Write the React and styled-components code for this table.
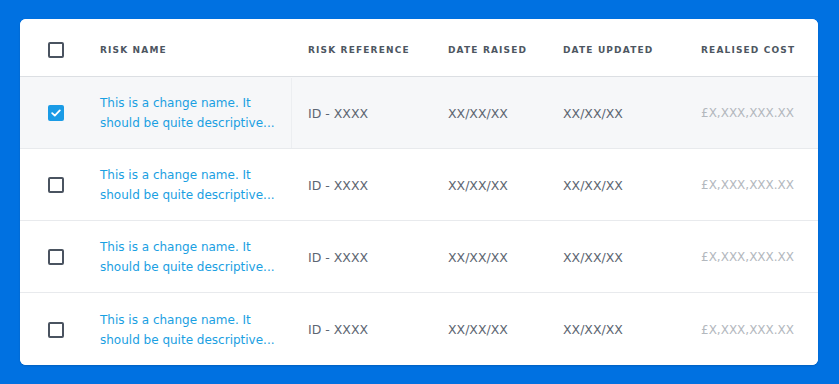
import React, { useState } from 'react'
import styled, { createGlobalStyle } from 'styled-components'

const Global = createGlobalStyle`
  html, body {
    margin: 0;
    padding: 0;
    background: #0071e1;
  }
  body {
    font-family: "DejaVu Sans", Verdana, sans-serif;
  }
`

const Page = styled.div`
  padding: 19px 21px 19px 20px;
`

const Card = styled.div`
  background: #fff;
  border-radius: 6px;
  overflow: hidden;
  box-shadow: 0 1px 2px rgba(0, 0, 0, 0.15);
`

const Row = styled.div`
  display: grid;
  grid-template-columns: 80px 192px 156px 115px 138px 1fr;
  align-items: stretch;
  box-sizing: border-box;
  height: ${p => (p.head ? '58px' : '72px')};
  padding-top: ${p => (p.head ? '4px' : '1px')};
  background: ${p => (p.selected ? '#f6f7f9' : '#fff')};
  border-bottom: 1px solid ${p => (p.head ? '#dcdfe3' : '#e8eaed')};
  &:last-child {
    border-bottom: none;
  }
`

const Cell = styled.div`
  display: flex;
  align-items: center;
  padding-left: ${p => p.pl || 0}px;
  border-right: ${p => (p.divider ? '1px solid #eceef1' : 'none')};
  font-size: 12.5px;
  color: #5d6672;
  white-space: nowrap;
`

const CheckCell = styled(Cell)`
  padding-left: 28px;
`

const HeadLabel = styled.span`
  font-size: 9px;
  font-weight: bold;
  letter-spacing: 1.15px;
  color: #4d5661;
  text-transform: uppercase;
`

const Name = styled.span`
  color: #1aa0e2;
  font-size: 12px;
  line-height: 20px;
  white-space: normal;
  width: 186px;
`

const Cost = styled.span`
  color: #b3b8be;
  font-size: 12px;
`

const Box = styled.div`
  width: 16px;
  height: 16px;
  box-sizing: border-box;
  border-radius: 2px;
  border: ${p => (p.checked ? 'none' : '2px solid #4a5360')};
  background: ${p => (p.checked ? '#1a9be6' : '#fff')};
  display: flex;
  align-items: center;
  justify-content: center;
  cursor: pointer;
`

function Checkbox({ checked, onClick }) {
  return (
    <Box checked={checked} onClick={onClick}>
      {checked && (
        <svg width="10" height="8" viewBox="0 0 10 8">
          <path d="M1.2 4.2 L3.8 6.6 L8.8 1.4" fill="none" stroke="#fff" strokeWidth="1.8" strokeLinecap="round" strokeLinejoin="round" />
        </svg>
      )}
    </Box>
  )
}

const rows = [1, 2, 3, 4]

export default function App() {
  const [sel, setSel] = useState({ 1: true })

  return (
    <Page>
      <Global />
      <Card>
        <Row head>
          <CheckCell><Checkbox checked={false} /></CheckCell>
          <Cell><HeadLabel>Risk name</HeadLabel></Cell>
          <Cell pl={16}><HeadLabel>Risk reference</HeadLabel></Cell>
          <Cell><HeadLabel>Date raised</HeadLabel></Cell>
          <Cell><HeadLabel>Date updated</HeadLabel></Cell>
          <Cell><HeadLabel>Realised cost</HeadLabel></Cell>
        </Row>
        {rows.map(id => (
          <Row key={id} selected={sel[id]}>
            <CheckCell>
              <Checkbox checked={!!sel[id]} onClick={() => setSel({ ...sel, [id]: !sel[id] })} />
            </CheckCell>
            <Cell divider={sel[id]}>
              <Name>This is a change name. It should be quite descriptive...</Name>
            </Cell>
            <Cell pl={16}>ID - XXXX</Cell>
            <Cell>XX/XX/XX</Cell>
            <Cell>XX/XX/XX</Cell>
            <Cell><Cost>£X,XXX,XXX.XX</Cost></Cell>
          </Row>
        ))}
      </Card>
    </Page>
  )
}
